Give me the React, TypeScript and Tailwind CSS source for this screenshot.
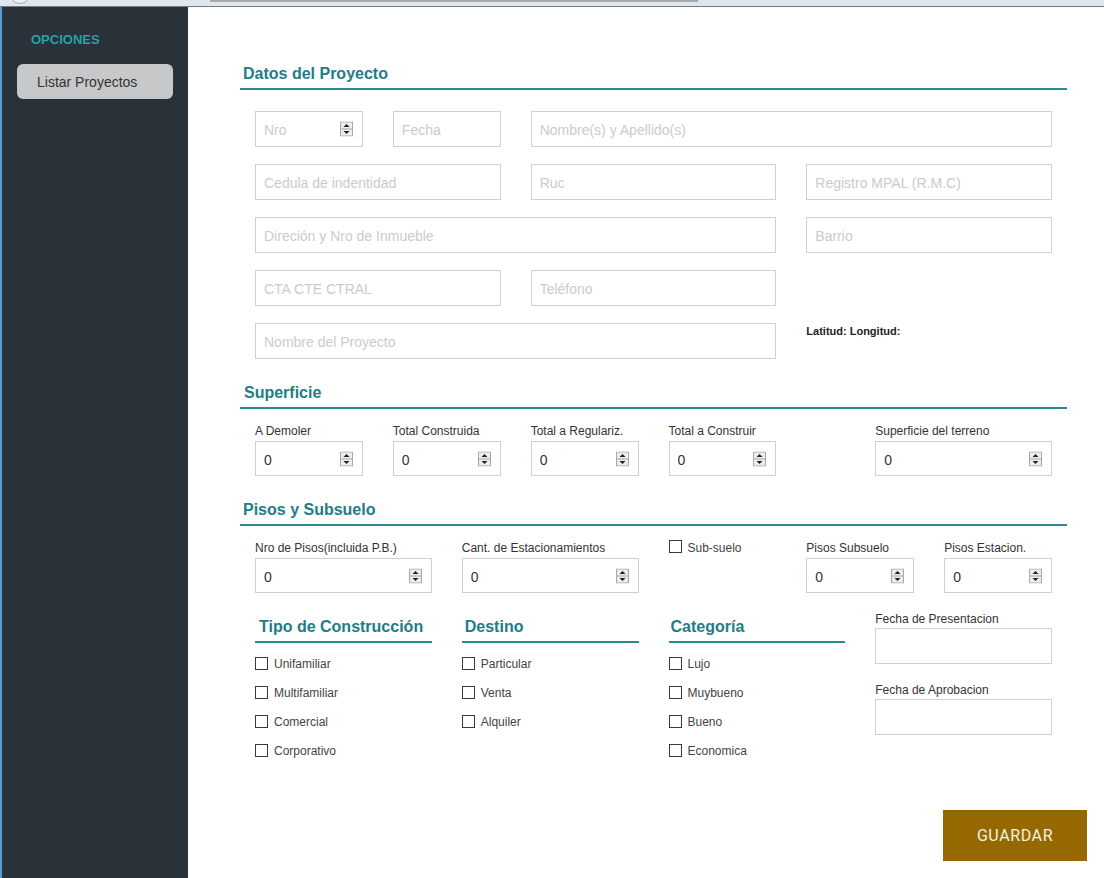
import React from "react";

function Spinner() {
  return (
    <svg width="13" height="15" viewBox="0 0 13 15" className="absolute right-[10px] top-1/2 -translate-y-1/2">
      <rect x="0.5" y="0.5" width="12" height="14" fill="#ededed" stroke="#a8a8a8" />
      <line x1="1" y1="7.5" x2="12" y2="7.5" stroke="#a8a8a8" />
      <path d="M3.5 5.5 L6.5 2.5 L9.5 5.5Z" fill="#222" />
      <path d="M3.5 9.5 L6.5 12.5 L9.5 9.5Z" fill="#222" />
    </svg>
  );
}

function TextField({ placeholder, span }: { placeholder: string; span: string }) {
  return (
    <div className={span}>
      <input
        placeholder={placeholder}
        className="h-[36px] w-full border border-[#d0d0d0] px-[8px] pt-[2px] text-[14px] text-[#333] outline-none placeholder:text-[#cbcbcb]"
      />
    </div>
  );
}

function NumberField({ value, placeholder, tall }: { value?: string; placeholder?: string; tall?: boolean }) {
  return (
    <div className="relative">
      <input
        readOnly
        value={value ?? ""}
        placeholder={placeholder}
        className={`${tall ? "h-[36px]" : "h-[35px]"} w-full border border-[#d0d0d0] px-[8px] pt-[2px] text-[14px] text-[#333] outline-none placeholder:text-[#cbcbcb]`}
      />
      <Spinner />
    </div>
  );
}

function LabeledNumber({ label, span }: { label: string; span: string }) {
  return (
    <div className={span}>
      <div className="mb-[3px] pt-[1px] text-[12px] leading-[14px] text-[#333]">{label}</div>
      <NumberField value="0" />
    </div>
  );
}

function SectionTitle({ children, className = "" }: { children: React.ReactNode; className?: string }) {
  return (
    <div className={`border-b-2 border-[#2b8b92] pb-[4px] pt-[1px] text-[16px] leading-[20px] font-bold text-[#217d85] ${className}`}>
      {children}
    </div>
  );
}

function Check({ label }: { label: string }) {
  return (
    <div className="flex h-[29px] items-center gap-[6px] pt-[1px] text-[12px] text-[#444]">
      <span className="mb-[2px] h-[13px] w-[13px] border border-[#3a3a3a] bg-white" />
      <span>{label}</span>
    </div>
  );
}

const TIPOS = ["Unifamiliar", "Multifamiliar", "Comercial", "Corporativo"];
const DESTINOS = ["Particular", "Venta", "Alquiler"];
const CATEGORIAS = ["Lujo", "Muybueno", "Bueno", "Economica"];

export default function App() {
  return (
    <div className="flex h-screen flex-col overflow-hidden bg-white font-['Liberation_Sans',Arial,sans-serif]">
      {/* browser chrome strip */}
      <div className="relative h-[7px] shrink-0 overflow-hidden border-b border-[#6e7d89] bg-[#dfe6ec]">
        <span className="absolute -top-[18px] left-[9px] h-[22px] w-[22px] rounded-full border border-[#a5acb2] bg-[#eef1f3]" />
        <span className="absolute left-[210px] top-0 h-[2px] w-[488px] bg-[#a9a9a9]" />
      </div>

      <div className="flex flex-1">
        <div className="w-[2px] bg-[#5b9bd5]" />

        {/* sidebar */}
        <aside className="w-[186px] shrink-0 bg-[#283238] pt-[25px]">
          <div className="pl-[29px] text-[13px] leading-[16px] font-bold text-[#27a1a9]">OPCIONES</div>
          <button className="ml-[15px] mt-[16px] flex h-[35px] w-[156px] items-center rounded-[6px] bg-[#c6c8c9] pl-[20px] pt-[1px] text-[14px] text-[#333]">
            Listar Proyectos
          </button>
        </aside>

        {/* main */}
        <main className="flex flex-1 flex-col pl-[52px] pt-[56px]">
          <div className="w-[827px]">
            <SectionTitle className="pl-[3px]">Datos del Proyecto</SectionTitle>
            <div className="ml-[15px] mt-[21px] grid w-[797px] grid-cols-12 gap-x-[30px] gap-y-[17px]">
              <div className="col-span-2">
                <NumberField placeholder="Nro" tall />
              </div>
              <TextField span="col-span-2" placeholder="Fecha" />
              <TextField span="col-span-8" placeholder="Nombre(s) y Apellido(s)" />

              <TextField span="col-span-4" placeholder="Cedula de indentidad" />
              <TextField span="col-span-4" placeholder="Ruc" />
              <TextField span="col-span-4" placeholder="Registro MPAL (R.M.C)" />

              <TextField span="col-span-8" placeholder="Direción y Nro de Inmueble" />
              <TextField span="col-span-4" placeholder="Barrio" />

              <TextField span="col-span-4" placeholder="CTA CTE CTRAL" />
              <TextField span="col-span-4" placeholder="Teléfono" />
              <div className="col-span-4" />

              <TextField span="col-span-8" placeholder="Nombre del Proyecto" />
              <div className="col-span-4 pt-[2px] text-[11px] leading-[13px] font-bold text-[#222]">Latitud: Longitud:</div>
            </div>

            <SectionTitle className="mt-[23px] pl-[4px]">Superficie</SectionTitle>
            <div className="ml-[15px] mt-[14px] grid w-[797px] grid-cols-12 gap-x-[30px]">
              <LabeledNumber span="col-span-2" label="A Demoler" />
              <LabeledNumber span="col-span-2" label="Total Construida" />
              <LabeledNumber span="col-span-2" label="Total a Regulariz." />
              <LabeledNumber span="col-span-2" label="Total a Construir" />
              <LabeledNumber span="col-span-3 col-start-10" label="Superficie del terreno" />
            </div>

            <SectionTitle className="mt-[23px] pl-[3px]">Pisos y Subsuelo</SectionTitle>
            <div className="ml-[15px] mt-[14px] grid w-[797px] grid-cols-12 gap-x-[30px]">
              <LabeledNumber span="col-span-3" label="Nro de Pisos(incluida P.B.)" />
              <LabeledNumber span="col-span-3" label="Cant. de Estacionamientos" />
              <div className="col-span-2 flex items-start gap-[6px] text-[12px] leading-[14px] text-[#444]">
                <span className="h-[13px] w-[13px] border border-[#3a3a3a] bg-white" />
                <span className="pt-[1px]">Sub-suelo</span>
              </div>
              <LabeledNumber span="col-span-2" label="Pisos Subsuelo" />
              <LabeledNumber span="col-span-2" label="Pisos Estacion." />
            </div>

            <div className="ml-[15px] mt-[18px] grid w-[797px] grid-cols-12 gap-x-[30px]">
              <div className="col-span-3 pt-[5px]">
                <SectionTitle className="pl-[4px]">Tipo de Construcción</SectionTitle>
                <div className="mt-[6px]">
                  {TIPOS.map((t) => (
                    <Check key={t} label={t} />
                  ))}
                </div>
              </div>
              <div className="col-span-3 pt-[5px]">
                <SectionTitle className="pl-[3px]">Destino</SectionTitle>
                <div className="mt-[6px]">
                  {DESTINOS.map((t) => (
                    <Check key={t} label={t} />
                  ))}
                </div>
              </div>
              <div className="col-span-3 pt-[5px]">
                <SectionTitle className="pl-[2px]">Categoría</SectionTitle>
                <div className="mt-[6px]">
                  {CATEGORIAS.map((t) => (
                    <Check key={t} label={t} />
                  ))}
                </div>
              </div>
              <div className="col-span-3">
                <div className="pt-[1px] text-[12px] leading-[14px] text-[#333]">Fecha de Presentacion</div>
                <input className="mt-[2px] h-[36px] w-full border border-[#d0d0d0] outline-none" />
                <div className="mt-[18px] pt-[1px] text-[12px] leading-[14px] text-[#333]">Fecha de Aprobacion</div>
                <input className="mt-[2px] h-[36px] w-full border border-[#d0d0d0] outline-none" />
              </div>
            </div>
          </div>

          <div className="mt-[45px] flex justify-end pr-[17px]">
            <button className="h-[51px] w-[144px] bg-[#956900] font-['Roboto',Arial,sans-serif] text-[16px] tracking-[0.6px] text-[#f6f1e4]">
              GUARDAR
            </button>
          </div>
        </main>
      </div>
    </div>
  );
}
